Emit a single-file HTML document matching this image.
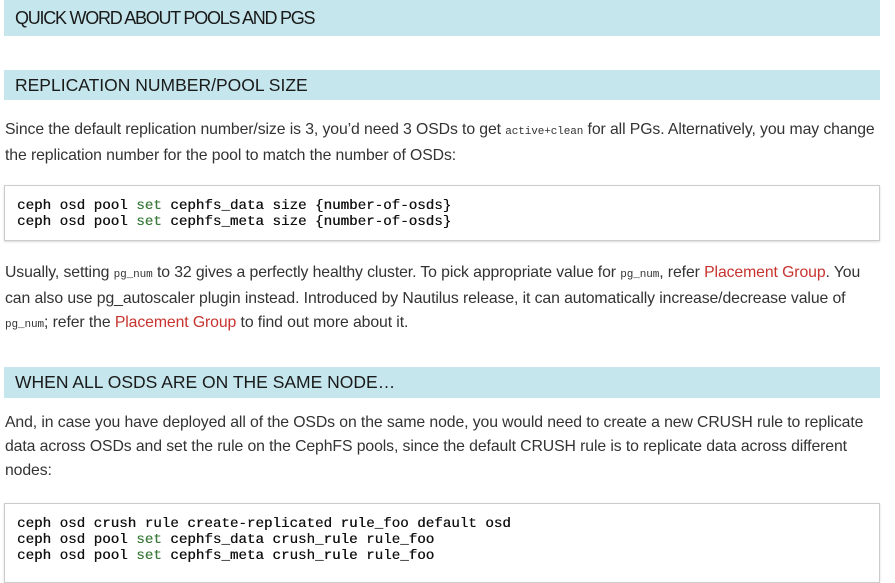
<!DOCTYPE html>
<html><head><meta charset="utf-8"><style>
*{margin:0;padding:0;box-sizing:border-box}
body{width:895px;height:575px;overflow:hidden;background:#fff;position:relative;font-family:"Liberation Sans",Arial,sans-serif;color:#333}
.h{position:absolute;left:4px;width:876px;background:#c4e6ec;color:#1a1a1a;font-size:17.5px;padding-left:11px;white-space:nowrap}
.p{position:absolute;left:5px;width:890px;font-size:15.8px;line-height:24px;color:#333;white-space:nowrap;letter-spacing:-0.1px}
.code{position:absolute;left:4px;width:876px;border:1px solid #ccc;box-shadow:0 1px 2px rgba(0,0,0,.15);background:#fff;font-family:"Liberation Mono",monospace;font-size:14.2px;line-height:16px;color:#111;text-shadow:0.3px 0 0 #111;padding-left:12px;white-space:pre}
.g{color:#3a7a3a;text-shadow:0.3px 0 0 #3a7a3a}
.a{color:#c8332e}
code{font-family:"Liberation Mono",monospace;font-size:11px}
</style></head><body>
<div class="h" style="top:0;height:36px;line-height:36px;font-size:18px;letter-spacing:-1.25px">QUICK WORD ABOUT POOLS AND PGS</div>
<div class="h" style="top:70px;height:30px;line-height:30px">REPLICATION NUMBER/POOL SIZE</div>
<div class="p" style="top:118px">Since the default replication number/size is 3, you’d need 3 OSDs to get <code>active+clean</code> for all PGs. Alternatively, you may change<br>the replication number for the pool to match the number of OSDs:</div>
<div class="code" style="top:185px;height:56px;padding-top:12px">ceph osd pool <span class="g">set</span> cephfs_data size {number-of-osds}
ceph osd pool <span class="g">set</span> cephfs_meta size {number-of-osds}</div>
<div class="p" style="top:261px">Usually, setting <code>pg_num</code> to 32 gives a perfectly healthy cluster. To pick appropriate value for <code>pg_num</code>, refer <span class="a">Placement Group</span>. You<br>can also use pg_autoscaler plugin instead. Introduced by Nautilus release, it can automatically increase/decrease value of<br><code>pg_num</code>; refer the <span class="a">Placement Group</span> to find out more about it.</div>
<div class="h" style="top:367px;height:31px;line-height:31px">WHEN ALL OSDS ARE ON THE SAME NODE…</div>
<div class="p" style="top:411px">And, in case you have deployed all of the OSDs on the same node, you would need to create a new CRUSH rule to replicate<br>data across OSDs and set the rule on the CephFS pools, since the default CRUSH rule is to replicate data across different<br>nodes:</div>
<div class="code" style="top:503px;height:80px;padding-top:12px">ceph osd crush rule create-replicated rule_foo default osd
ceph osd pool <span class="g">set</span> cephfs_data crush_rule rule_foo
ceph osd pool <span class="g">set</span> cephfs_meta crush_rule rule_foo</div>
</body></html>
